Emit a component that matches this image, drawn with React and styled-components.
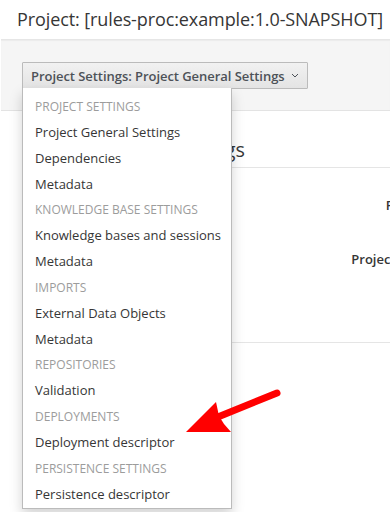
import styled, { createGlobalStyle } from 'styled-components'

const GlobalStyle = createGlobalStyle`
  html, body {
    margin: 0;
    padding: 0;
    background: #fff;
    overflow: hidden;
  }
  body {
    font-family: "Open Sans", "Liberation Sans", sans-serif;
    color: #363636;
  }
`

const menu = [
  { header: true, label: 'Project Settings' },
  { label: 'Project General Settings' },
  { label: 'Dependencies' },
  { label: 'Metadata' },
  { header: true, label: 'Knowledge Base Settings' },
  { label: 'Knowledge bases and sessions' },
  { label: 'Metadata' },
  { header: true, label: 'Imports' },
  { label: 'External Data Objects' },
  { label: 'Metadata' },
  { header: true, label: 'Repositories' },
  { label: 'Validation' },
  { header: true, label: 'Deployments' },
  { label: 'Deployment descriptor' },
  { header: true, label: 'Persistence Settings' },
  { label: 'Persistence descriptor' },
]

function App() {
  return (
    <Page>
      <GlobalStyle />
      <Header>Project: [rules-proc:example:1.0-SNAPSHOT]</Header>
      <Toolbar>
        <SettingsButton>
          Project Settings: Project General Settings
          <Caret viewBox="0 0 8 5">
            <path d="M1 1 L4 4 L7 1" fill="none" stroke="#4d5258" strokeWidth="1" />
          </Caret>
        </SettingsButton>
        <Menu>
          {menu.map((m, i) => (
            <MenuItem key={i} $header={m.header}>{m.label}</MenuItem>
          ))}
        </Menu>
      </Toolbar>
      <Content>
        <Heading>Project General Settings</Heading>
        <Form>
          <FormRow>
            <Label>Project Name</Label>
          </FormRow>
          <FormRow>
            <Label>Project Description</Label>
          </FormRow>
        </Form>
        <Divider />
      </Content>
      <Arrow width="390" height="512" viewBox="0 0 390 512">
        <line x1="208" y1="421" x2="277" y2="393" stroke="#ff0000" strokeWidth="7" strokeLinecap="round" />
        <polygon points="186,432 216,402 219,416 224,424 231,432" fill="#ff0000" />
      </Arrow>
    </Page>
  )
}

const Page = styled.div`
  position: relative;
  width: 390px;
  height: 512px;
  overflow: hidden;
`

const Header = styled.div`
  height: 39px;
  padding-left: 17px;
  font-size: 18px;
  letter-spacing: -0.1px;
  line-height: 38px;
  color: #363636;
  white-space: nowrap;
`

const Toolbar = styled.div`
  position: relative;
  height: 72px;
  margin-left: 1px;
  background: #f5f5f5;
  border-top: 1px solid #e6e6e6;
  border-bottom: 1px solid #e3e3e3;
  box-shadow: inset 0 1px 1px rgba(0, 0, 0, 0.04);
  padding: 22px 0 0 21px;
  box-sizing: border-box;
  z-index: 2;
`

const SettingsButton = styled.button`
  display: flex;
  align-items: center;
  gap: 6px;
  height: 27px;
  padding: 0 8px 0 8px;
  border: 1px solid #bbb;
  border-radius: 1px;
  background: linear-gradient(#f1f1f1, #e4e4e4);
  font-family: inherit;
  font-size: 13px;
  font-weight: 600;
  letter-spacing: -0.05px;
  color: #4d5258;
  white-space: nowrap;
`

const Caret = styled.svg`
  width: 8px;
  height: 5px;
`

const Menu = styled.div`
  position: absolute;
  top: 48px;
  left: 21px;
  width: 208px;
  padding-top: 6px;
  background: #fff;
  border: 1px solid #bbb;
  border-top: none;
  box-shadow: 0 6px 12px rgba(0, 0, 0, 0.175);
`

const MenuItem = styled.div`
  height: 25.85px;
  line-height: 25px;
  padding-left: 12px;
  font-size: ${p => (p.$header ? '12px' : '13px')};
  color: ${p => (p.$header ? '#9c9c9c' : '#363636')};
  text-transform: ${p => (p.$header ? 'uppercase' : 'none')};
  white-space: nowrap;
`

const Content = styled.div`
  padding: 25px 0 0 24px;
`

const Heading = styled.div`
  font-size: 19.8px;
  line-height: 28px;
  color: #363636;
  padding-bottom: 3px;
  border-bottom: 1px solid #e5e5e5;
  white-space: nowrap;
`

const Form = styled.div`
  display: flex;
  flex-direction: column;
  gap: 28px;
  padding: 24px 0 70px;
`

const FormRow = styled.div`
  display: grid;
  grid-template-columns: 447px 1fr;
`

const Label = styled.div`
  text-align: right;
  font-size: 13px;
  font-weight: 600;
  color: #363636;
  white-space: nowrap;
  line-height: 26px;
`

const Divider = styled.div`
  border-bottom: 1px solid #e5e5e5;
`

const Arrow = styled.svg`
  position: absolute;
  top: 0;
  left: 0;
  z-index: 3;
  pointer-events: none;
`

export default App
